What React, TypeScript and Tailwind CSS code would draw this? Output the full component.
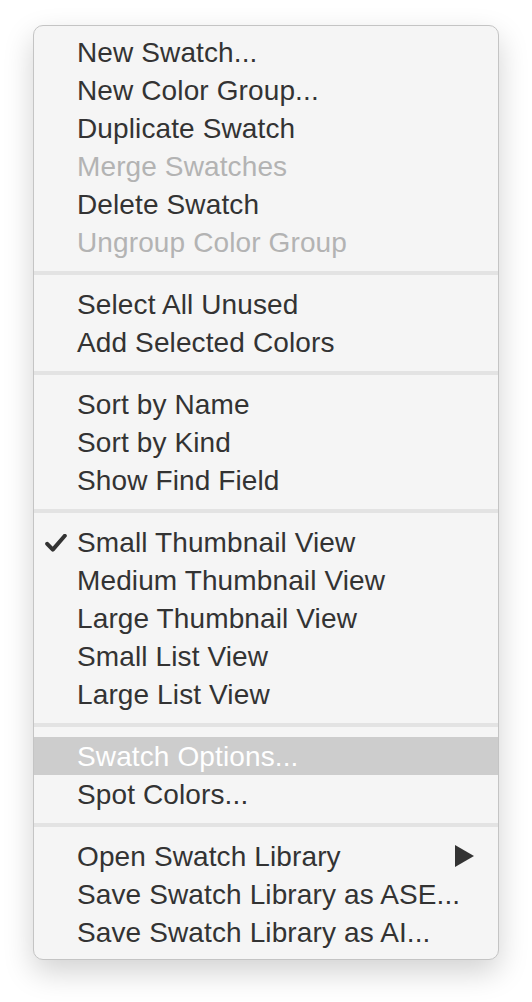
import React from 'react';

type Item = {
  label: string;
  disabled?: boolean;
  checked?: boolean;
  highlighted?: boolean;
  submenu?: boolean;
};

const groups: Item[][] = [
  [
    { label: 'New Swatch...' },
    { label: 'New Color Group...' },
    { label: 'Duplicate Swatch' },
    { label: 'Merge Swatches', disabled: true },
    { label: 'Delete Swatch' },
    { label: 'Ungroup Color Group', disabled: true },
  ],
  [{ label: 'Select All Unused' }, { label: 'Add Selected Colors' }],
  [{ label: 'Sort by Name' }, { label: 'Sort by Kind' }, { label: 'Show Find Field' }],
  [
    { label: 'Small Thumbnail View', checked: true },
    { label: 'Medium Thumbnail View' },
    { label: 'Large Thumbnail View' },
    { label: 'Small List View' },
    { label: 'Large List View' },
  ],
  [{ label: 'Swatch Options...', highlighted: true }, { label: 'Spot Colors...' }],
  [
    { label: 'Open Swatch Library', submenu: true },
    { label: 'Save Swatch Library as ASE...' },
    { label: 'Save Swatch Library as AI...' },
  ],
];

const MenuRow: React.FC<{ item: Item }> = ({ item }) => {
  const color = item.highlighted
    ? 'bg-[#cdcdcd] text-white'
    : item.disabled
      ? 'text-[#b3b3b3]'
      : 'text-[#333333]';
  return (
    <div className={`relative flex items-center h-[38px] pl-[43px] pr-[24px] pt-[2px] ${color}`}>
      {item.checked && (
        <svg
          className="absolute left-[11px] top-[11px]"
          width="22"
          height="18"
          viewBox="0 0 22 18"
        >
          <path
            d="M2.2 9.8 L7.8 15.6 L19.8 1.8"
            fill="none"
            stroke="#333333"
            strokeWidth="4"
            strokeLinecap="round"
            strokeLinejoin="round"
          />
        </svg>
      )}
      <span className="flex-1 whitespace-nowrap tracking-[0.12px]">{item.label}</span>
      {item.submenu && (
        <svg width="19" height="22" viewBox="0 0 19 22" className="-mt-[2px]">
          <path d="M0 0 L19 11 L0 22 Z" fill="#333333" />
        </svg>
      )}
    </div>
  );
};

export default function App() {
  return (
    <div className="w-[532px] h-[1002px] bg-white pt-[25px] pl-[33px]">
      <div
        className="w-[466px] rounded-[10px] border border-[#c4c4c4] bg-[#f5f5f5] pt-[7px] pb-[8px] shadow-[0_12px_30px_rgba(0,0,0,0.18)] text-[28px] leading-none"
        style={{ fontFamily: '"Liberation Sans", Arial, sans-serif' }}
      >
        {groups.map((group, gi) => (
          <div key={gi}>
            {gi > 0 && (
              <div className="flex items-center h-[24px]">
                <div className="w-full h-[4px] bg-[#e3e3e3]" />
              </div>
            )}
            {group.map((item) => (
              <MenuRow key={item.label} item={item} />
            ))}
          </div>
        ))}
      </div>
    </div>
  );
}
